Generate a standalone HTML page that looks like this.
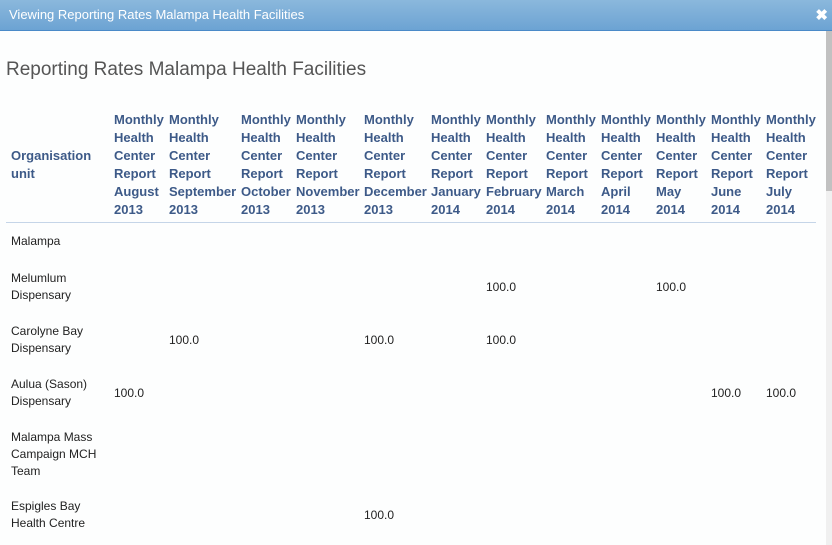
<html><head><style>
body{margin:0;width:832px;height:545px;overflow:hidden;background:#fdfefe;font-family:"Liberation Sans",sans-serif;position:relative}
.bar{position:absolute;left:0;top:0;width:832px;height:30px;background:linear-gradient(#8bb8dc,#6ca3d3);border-bottom:1px solid #4a8ac8}
.bar span{position:absolute;left:9px;top:7px;color:#fff;font-size:13px}
.x{position:absolute;right:4px;top:6px;color:#fff;font-size:15px;font-weight:bold}
.sb{position:absolute;right:0;top:31px;width:6px;height:514px;background:#f0f0f0}
.sb div{width:6px;height:160px;background:#c1c1c1}
h1{position:absolute;left:6px;top:59px;margin:0;font-weight:normal;font-size:19px;color:#555}
.h{position:absolute;top:111px;font-size:13px;font-weight:bold;color:#3d5a88;line-height:18px;white-space:nowrap}
.line{position:absolute;left:6px;top:222px;width:810px;height:1px;background:#c5d5e8}
.t{position:absolute;font-size:12px;color:#222;line-height:17px}
</style></head><body>
<div class="bar"><span>Viewing Reporting Rates Malampa Health Facilities</span><div class="x">✖</div></div>
<div class="sb"><div></div></div>
<h1>Reporting Rates Malampa Health Facilities</h1>
<div class="h" style="left:11px;top:147px">Organisation<br>unit</div>
<div class="h" style="left:114px">Monthly<br>Health<br>Center<br>Report<br>August<br>2013</div>
<div class="h" style="left:169px">Monthly<br>Health<br>Center<br>Report<br>September<br>2013</div>
<div class="h" style="left:241px">Monthly<br>Health<br>Center<br>Report<br>October<br>2013</div>
<div class="h" style="left:296px">Monthly<br>Health<br>Center<br>Report<br>November<br>2013</div>
<div class="h" style="left:364px">Monthly<br>Health<br>Center<br>Report<br>December<br>2013</div>
<div class="h" style="left:431px">Monthly<br>Health<br>Center<br>Report<br>January<br>2014</div>
<div class="h" style="left:486px">Monthly<br>Health<br>Center<br>Report<br>February<br>2014</div>
<div class="h" style="left:546px">Monthly<br>Health<br>Center<br>Report<br>March<br>2014</div>
<div class="h" style="left:601px">Monthly<br>Health<br>Center<br>Report<br>April<br>2014</div>
<div class="h" style="left:656px">Monthly<br>Health<br>Center<br>Report<br>May<br>2014</div>
<div class="h" style="left:711px">Monthly<br>Health<br>Center<br>Report<br>June<br>2014</div>
<div class="h" style="left:766px">Monthly<br>Health<br>Center<br>Report<br>July<br>2014</div>
<div class="line"></div>
<div class="t" style="left:11px;top:233px">Malampa</div>
<div class="t" style="left:11px;top:270px">Melumlum<br>Dispensary</div>
<div class="t" style="left:486px;top:279px">100.0</div>
<div class="t" style="left:656px;top:279px">100.0</div>
<div class="t" style="left:11px;top:323px">Carolyne Bay<br>Dispensary</div>
<div class="t" style="left:169px;top:332px">100.0</div>
<div class="t" style="left:364px;top:332px">100.0</div>
<div class="t" style="left:486px;top:332px">100.0</div>
<div class="t" style="left:11px;top:376px">Aulua (Sason)<br>Dispensary</div>
<div class="t" style="left:114px;top:385px">100.0</div>
<div class="t" style="left:711px;top:385px">100.0</div>
<div class="t" style="left:766px;top:385px">100.0</div>
<div class="t" style="left:11px;top:429px">Malampa Mass<br>Campaign MCH<br>Team</div>
<div class="t" style="left:11px;top:498px">Espigles Bay<br>Health Centre</div>
<div class="t" style="left:364px;top:507px">100.0</div>
</body></html>
